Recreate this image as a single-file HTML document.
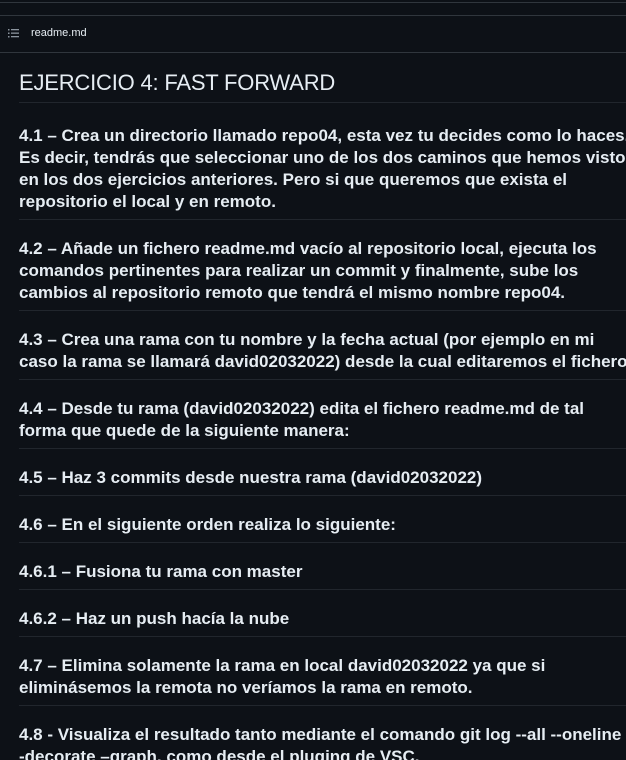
<!DOCTYPE html>
<html><head><meta charset="utf-8"><style>
html,body{margin:0;padding:0;background:#0d1117;width:626px;height:760px;overflow:hidden}
body{font-family:"Liberation Sans",sans-serif;color:#e6edf3;position:relative}
.l1{position:absolute;left:0;right:0;top:2px;border-top:1px solid #30363d}
.l2{position:absolute;left:0;right:0;top:15px;border-top:1px solid #30363d}
.l3{position:absolute;left:0;right:0;top:52px;border-top:1px solid #30363d}
.hdr{position:absolute;left:31px;top:27px;font-size:11px;color:#e6edf3}
.ic{position:absolute;left:8px;top:29px}
.content{position:absolute;left:19px;top:68px;width:700px}
h1{font-size:22px;font-weight:normal;margin:0;line-height:30px;padding-bottom:4px;border-bottom:1px solid #21262d;width:640px;white-space:nowrap;letter-spacing:-0.2px}
h3{font-size:17px;font-weight:bold;margin:18px 0 0;line-height:22px;padding-bottom:6px;border-bottom:1px solid #21262d;width:640px;white-space:nowrap;letter-spacing:0}
h1+h3{margin-top:22px}
</style></head><body>
<div class="l1"></div><div class="l2"></div><div class="l3"></div>
<svg class="ic" width="11" height="9" viewBox="0 0 11 9"><g fill="#8b949e"><rect x="0" y="0" width="1.5" height="1.5"/><rect x="0" y="3.5" width="1.5" height="1.5"/><rect x="0" y="7" width="1.5" height="1.5"/><rect x="3" y="0" width="8" height="1.3"/><rect x="3" y="3.5" width="8" height="1.3"/><rect x="3" y="7" width="8" height="1.3"/></g></svg>
<div class="hdr">readme.md</div>
<div class="content">
<h1>EJERCICIO 4: FAST FORWARD</h1>
<h3>4.1 – Crea un directorio llamado repo04, esta vez tu decides como lo haces.<br>Es decir, tendrás que seleccionar uno de los dos caminos que hemos visto<br>en los dos ejercicios anteriores. Pero si que queremos que exista el<br>repositorio el local y en remoto.</h3>
<h3>4.2 – Añade un fichero readme.md vacío al repositorio local, ejecuta los<br>comandos pertinentes para realizar un commit y finalmente, sube los<br>cambios al repositorio remoto que tendrá el mismo nombre repo04.</h3>
<h3>4.3 – Crea una rama con tu nombre y la fecha actual (por ejemplo en mi<br>caso la rama se llamará david02032022) desde la cual editaremos el fichero</h3>
<h3>4.4 – Desde tu rama (david02032022) edita el fichero readme.md de tal<br>forma que quede de la siguiente manera:</h3>
<h3>4.5 – Haz 3 commits desde nuestra rama (david02032022)</h3>
<h3>4.6 – En el siguiente orden realiza lo siguiente:</h3>
<h3>4.6.1 – Fusiona tu rama con master</h3>
<h3>4.6.2 – Haz un push hacía la nube</h3>
<h3>4.7 – Elimina solamente la rama en local david02032022 ya que si<br>eliminásemos la remota no veríamos la rama en remoto.</h3>
<h3>4.8 - Visualiza el resultado tanto mediante el comando git log --all --oneline -<br>-decorate –graph, como desde el pluging de VSC.</h3>
</div>
</body></html>
